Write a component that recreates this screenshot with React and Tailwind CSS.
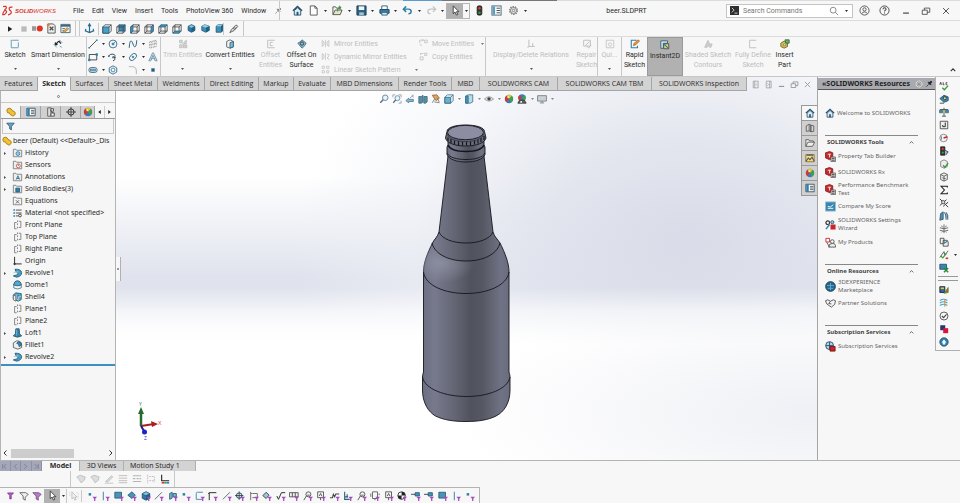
import { clsx } from "clsx";

const ICONS = {
  home: <><path d="M1 6.2 6 1.5l5 4.7" stroke="#24506e" strokeWidth="1.5" /><path d="M2.5 6v5h7V6L6 3z" fill="#dcebf3" stroke="#24506e" /><path d="M5 11V7.5h2V11" fill="#24506e" stroke="none" /></>,
  newDoc: <><path d="M2.5 1h5l2.500 2.500V11h-7.500z" fill="#fff" stroke="#555" /><path d="M7.500 1v2.500H10" stroke="#555" /></>,
  open: <><path d="M1 10.500V2h3l1 1.500h4V5" fill="#f5f5f5" stroke="#555" /><path d="M1 10.500 3.500 5.500H11L9 10.500z" fill="#e9e5c9" stroke="#555" /><path d="M6 7c0-3 1-4.500 3-4.500M7.500 1 9.500 2.500 8 4" stroke="#3f9a42" strokeWidth="1.200" /></>,
  save: <><path d="M1 1h10v10H1z" fill="#2b617f" stroke="#1d4258" /><path d="M3 1.500h6v4H3z" fill="#eef4f7" stroke="none" /><path d="M3.500 8h5v3h-5z" fill="#9fc4d6" stroke="none" /></>,
  print: <><path d="M3 1h6v4H3z" fill="#fff" stroke="#2b617f" /><path d="M1 5h10v4H1z" fill="#3d7fa3" stroke="#1d4258" /><path d="M3 8h6v3H3z" fill="#dcebf3" stroke="#2b617f" /></>,
  undo: <path d="M4.500 1.500 1.500 4.500l3 3M1.500 4.500H7q3 0 3 2.500T7 9.500" stroke="#2f7fa8" strokeWidth="1.600" />,
  redo: <path d="M7.500 1.500l3 3-3 3M10.500 4.500H5q-3 0-3 2.500t3 2.500" stroke="#c4c4c4" strokeWidth="1.400" />,
  cursor: <path d="M3.500 1v8.500l2-1.800L7 11l1.500-.7-1.500-3h2.700z" fill="#fff" stroke="#333" strokeWidth=".9" />,
  cursorOff: <><path d="M3.500 1v8.500l2-1.800L7 11l1.500-.7-1.500-3h2.700z" fill="#f2f2f2" stroke="#bbb" /><path d="M1 1v5M9 2h2v7" stroke="#ccc" strokeDasharray="1 1" /></>,
  light: <><rect x="3.500" y="1" width="5" height="10" rx="1.500" fill="#333" stroke="#222" /><circle cx="6" cy="3.500" r="1.400" fill="#e0402c" stroke="none" /><circle cx="6" cy="8.500" r="1.400" fill="#2d9b45" stroke="none" /></>,
  list: <><rect x="1" y="1" width="10" height="10" fill="#fff" stroke="#41677c" /><path d="M1.500 1.500h3v9h-3z" fill="#5d9dbb" stroke="none" /><path d="M6 3.500h4M6 6h4M6 8.500h4" stroke="#444" /></>,
  gear: <><circle cx="6" cy="6" r="4.200" stroke="#777" strokeWidth="1.400" strokeDasharray="1.600 1" /><circle cx="6" cy="6" r="3.200" stroke="#777" /><circle cx="6" cy="6" r="1.300" stroke="#777" /></>,
  gearLight: <><circle cx="6" cy="6" r="4.500" fill="#ddd" stroke="#f2f2f2" strokeWidth="1.500" strokeDasharray="1.600 1" /><circle cx="6" cy="6" r="3.200" stroke="#666" /><circle cx="6" cy="6" r="1.300" fill="#555" /></>,
  pin: <path d="M5 2.500 9.500 7M9 1.500 10.500 3 8.500 5 8 7.500 4.500 4 7 3.500zM5.500 6.500 2 10" fill="#999" stroke="#777" />,
  pinDark: <path d="M5 2.500 9.500 7M9 1.500 10.500 3 8.500 5 8 7.500 4.500 4 7 3.500zM5.500 6.500 2 10" fill="#222" stroke="#222" />,
  user: <><circle cx="6" cy="6" r="5" stroke="#555" /><circle cx="6" cy="4.800" r="1.800" stroke="#555" /><path d="M2.800 9.500q3.200-4 6.400 0" stroke="#555" /></>,
  help: <><circle cx="6" cy="6" r="5" stroke="#444" /><path d="M4.300 4.700q.2-1.700 1.800-1.700 1.600 0 1.600 1.500C7.700 5.700 6 5.600 6 7.200M6 8.200v1" stroke="#444" strokeWidth="1.100" /></>,
  min: <path d="M2.500 8.500h7" stroke="#333" strokeWidth="1.300" />,
  restore: <path d="M1.500 5h6v5h-6zM4 5V2.500h6.500v5H7.500" stroke="#444" />,
  close: <path d="m2.500 2.500 7 7m0-7-7 7" stroke="#444" strokeWidth="1.100" />,
  minGrey: <path d="M2.500 8.500h7" stroke="#888" strokeWidth="1.300" />,
  restoreGrey: <path d="M1.500 5h6v5h-6zM4 5V2.500h6.500v5H7.500" stroke="#888" />,
  closeGrey: <path d="m2.500 2.500 7 7m0-7-7 7" stroke="#999" strokeWidth="1.200" />,
  paneLeft: <path d="M3 1.500h6.500v9H3zM5 1.500v9M8.200 4.500 6.700 6l1.500 1.500" stroke="#999" />,
  paneRight: <path d="M3 1.500h6.500v9H3zM7.500 1.500v9M4.500 4.500 6 6 4.500 7.500" stroke="#999" />,
  search: <><circle cx="5" cy="5" r="3.500" stroke="#777" /><path d="m7.500 7.500 3.500 3.500" stroke="#777" /></>,
  prompt: <><rect width="12" height="12" fill="#2f2f2f" stroke="none" /><path d="m2.500 2.500 3 3-3 3M6 9.500h4" stroke="#fff" /></>,
  play: <path d="M3 2v8l6.500-4z" fill="#222" stroke="none" />,
  stop: <path d="M2 2h8v8H2z" fill="#bbb" stroke="none" />,
  record: <><path d="M0 3.500h4.500v5H0z" fill="#999" stroke="none" /><circle cx="8.500" cy="6" r="3.300" fill="#dd3322" stroke="none" /></>,
  macroNew: <><path d="M2 1h6l2 2v8H2z" fill="#eee" stroke="#555" /><path d="M4 4l4 4M4 8l4-4" stroke="#555" strokeWidth="1.500" /><path d="M1 1h3v2H1z" fill="#e07b2d" stroke="none" /></>,
  macroEdit: <><path d="M1 1.500h10v9H1z" fill="#eef3f6" stroke="#41677c" /><path d="M1 3h10" stroke="#41677c" strokeWidth="2" /><path d="M3 9.500 8 5l1.500 1.500L4.500 10.500z" fill="#e4ad4a" stroke="#80602a" strokeWidth=".6" /><path d="M2.500 6h3M2.500 8h2" stroke="#777" /></>,
  anchor: <path d="M6 1v9M2 6.500 1.500 8.500 6 10.500l4.500-2L10 6.500M4.500 3.500 6 1l1.500 2.500" stroke="#2b6d91" strokeWidth="1.300" />,
  cubeFront: <><path d="M1 3.500 3.500 1H11v7.500L8.500 11H1z" fill="#fff" stroke="#444" /><path d="M1 3.500h7.500V11H1z" fill="#4e9dc4" stroke="#235a78" /><path d="M8.500 3.500 11 1" stroke="#444" /></>,
  cubeBack: <><path d="M3.500 1H11v7.500H3.500z" fill="#3d87ad" stroke="#235a78" /><path d="M1 3.500h7.500V11H1zM1 3.500 3.500 1M1 11l2.500-2.500M8.500 11 11 8.500M8.500 3.500 11 1" stroke="#444" /></>,
  cubeLeft: <><path d="M1 3.500 3.500 1H11v7.500L8.500 11H1zM8.500 3.500V11M1 3.500h7.500L11 1M3.500 8.500H11" stroke="#444" /><path d="M1 3.500 3.500 1v7.500L1 11z" fill="#4e9dc4" stroke="#235a78" /></>,
  cubeRight: <><path d="M1 3.500 3.500 1H11v7.500L8.500 11H1zM3.500 1v7.500H11M1 3.500h7.500M1 11l2.500-2.500" stroke="#444" /><path d="M8.500 3.500 11 1v7.500L8.500 11z" fill="#4e9dc4" stroke="#235a78" /></>,
  cubeTop: <><path d="M1 3.500V11h7.500L11 8.500V1M8.500 3.500V11M3.500 1v7.500H11M1 11l2.500-2.500" stroke="#444" /><path d="M1 3.500 3.500 1H11L8.500 3.500z" fill="#4e9dc4" stroke="#235a78" /></>,
  cubeBottom: <><path d="M1 11V3.500L3.500 1H11v7.500M1 3.500h7.500V11M8.500 3.500 11 1M3.500 1v7.500" stroke="#444" /><path d="M1 11l2.500-2.500H11L8.500 11z" fill="#4e9dc4" stroke="#235a78" /></>,
  iso: <><path d="M6 1 10.500 3.200v5.500L6 11 1.500 8.700V3.200z" fill="#2d7ba3" stroke="#1c5474" /><path d="M6 1 10.500 3.200 6 5.500 1.500 3.200z" fill="#8cc4de" stroke="#1c5474" strokeWidth=".6" /><path d="M6 5.500 10.500 3.200v5.500L6 11z" fill="#1f5f82" stroke="none" /></>,
  isoB: <><path d="M5 1 11 3v5.500L6.500 11 1 8.500V3z" fill="#3c8fb8" stroke="#1c5474" /><path d="M5 1 11 3 6.500 5 1 3z" fill="#9acde3" stroke="none" /><path d="M6.500 5 11 3v5.500L6.500 11z" fill="#1f5f82" stroke="none" /></>,
  isoC: <><path d="M1.500 3 4 1h6.500v8L8 11H1.500z" fill="#3c8fb8" stroke="#1c5474" /><path d="M1.500 3 4 1h6.500L8 3z" fill="#9acde3" stroke="none" /><path d="M8 3l2.500-2v8L8 11z" fill="#1f5f82" stroke="none" /></>,
  viewPick: <path d="M1 10.500 3 6.500 8 1.500q2-.5 2.500 1.500L6 8 3.500 9zM5 6l2-2M6 7l3-3" fill="#ddd" stroke="#555" />,
  sketch: <path d="M10.500 1.500H3q-1.500 0-1.500 1.500v7.500H10M1 1v1M10 4v6" stroke="#4f8fb0" />,
  dim: <><path d="M2.500 7 7 2.500M2.500 7l.5-3M2.500 7l3-.5M7 2.500l2.500 3" stroke="#222" strokeWidth="1.400" /><path d="M1 6.500 4.500 10M7.500 1l3.500 3.500M8 8.500l2.500 1.500" stroke="#4f8fb0" /></>,
  line: <><path d="M1.500 10.500 10.500 1.500" stroke="#333" /><path d="M.5 9.500h2v2h-2zM9.500.5h2v2h-2z" fill="#2f7fa8" stroke="none" /></>,
  circle: <><circle cx="6" cy="6" r="4.700" stroke="#2b5f7e" /><path d="M6 6 9.500 2.500M5 5h2v2H5z" fill="#2f7fa8" stroke="#2f7fa8" /></>,
  spline: <path d="M1.500 10.500C2 1 4 0 6 6s4 4 4.500-4.500" stroke="#2b5f7e" strokeWidth="1.200" />,
  planeIcon: <path d="M2 3.500 10 1.500V9l-8 2zM4.500 3v7.500M7.500 2v7.500M2 7l8-2" stroke="#999" strokeDasharray="2 1" />,
  rect: <><path d="M1.500 3h9v6.500h-9z" stroke="#333" /><path d="M.5 8.500h2v2h-2zM9.500 2h2v2h-2z" fill="#2f7fa8" stroke="#2f7fa8" /></>,
  arc: <><path d="M1 4.500Q5 .5 9 4.500M6.500 5.500l3 1M7 5.500Q10 9.500 6 10.500" stroke="#333" strokeWidth="1.100" /><path d="M0 4h2v2H0zM5 5.500h2v2H5z" fill="#2f7fa8" stroke="none" /></>,
  ellipse: <><ellipse cx="6" cy="6" rx="5" ry="3.200" transform="rotate(-45 6 6)" stroke="#2b5f7e" /><circle cx="6" cy="6" r="1" fill="#2f7fa8" stroke="#2f7fa8" /></>,
  text: <path d="M1 10.500 5.500 1h1L11 10.500H8.500L6 4 3.500 10.500zM3.500 8h5" fill="#cbdde8" stroke="#6a8fa5" />,
  slot: <><rect x="1" y="3" width="10" height="6" rx="3" stroke="#2b5f7e" /><rect x="3" y="4.800" width="6" height="2.400" fill="#85b7d0" stroke="#2b5f7e" strokeWidth=".7" /></>,
  polygon: <><path d="m6 1 4.500 2.500v5L6 11 1.500 8.500v-5z" stroke="#2b5f7e" /><circle cx="6" cy="6" r="2.300" stroke="#2f7fa8" /></>,
  fillet: <path d="M1 2h4q5 0 5 5v4" stroke="#aaa" />,
  point: <path d="M4 4h4v4H4z" fill="#245d82" stroke="none" />,
  trim: <path d="M2 1.500h3v3H2zM7 4l3-2.500v4H7zM2 7h3v3.500H2zM6.500 7h4v3.500h-4zM5 5l5 5" fill="#ddd" stroke="#bbb" />,
  convert: <><path d="M2 3 6 1l4 2v6.500l-4 1.500-4-1.500z" fill="#eef3f6" stroke="#555" /><path d="M6 4.500 10 3v6.500L6 11z" fill="#86b9d2" stroke="#2b5f7e" /></>,
  offset: <path d="M10.500 1.500H2v9h8.500M8 4H5v4h3" stroke="#c2c2c2" strokeWidth="1.200" />,
  surface: <><path d="M1 5q3-1 5-4l5 4q-1 3-5 6z" fill="#8dbdd3" stroke="#356c88" /><circle cx="6" cy="5.500" r="2" stroke="#333" /></>,
  mirror: <path d="M6 1v10M1.500 2v8L4 8V4zM10.500 2v8L8 8V4z" fill="#eee" stroke="#c2c2c2" />,
  mirrorDyn: <path d="M6 1v10M1.500 2v8L4 8V4zM8 3q3-1 3 2L8 8l3 2" fill="#eee" stroke="#c2c2c2" />,
  pattern: <path d="M1.500 1.500h3v3h-3zM7.500 1.500h3v3h-3zM1.500 7.500h3v3h-3zM7.500 7.500h3v3h-3z" stroke="#c2c2c2" />,
  move: <path d="M1 5.500v-4h5M4.500 0 6 1.500 4.500 3M7.500 1.500h3.500v3.500H7.500zM1 8h3" stroke="#bbb" />,
  copy: <path d="M1.500 6.500h4v4h-4zM2 4V2h4M7.500 1.500h3v3h-3z" stroke="#bbb" />,
  relations: <path d="M3.500 1v8h7M1.500 9.500h2M8 5v4" stroke="#c2c2c2" strokeWidth="1.300" />,
  repair: <path d="M2 1.500h8v7H2zM4 8l5-5M6 9l2 2 3-4" stroke="#c2c2c2" strokeWidth="1.200" />,
  snaps: <><path d="M1.500 1.500h9v9h-9z" stroke="#c2c2c2" /><circle cx="6" cy="6.500" r="2" stroke="#c2c2c2" /></>,
  rapid: <><path d="M8 1.500H1.500v9H9V8" stroke="#2f7fa8" strokeWidth="1.300" /><path d="m4 8 1-3 5-4 1.500 1.500L7 7z" fill="#e49a3a" stroke="#9a4b1c" strokeWidth=".7" /></>,
  instant: <><path d="M1 1h8v3H4v6H1z" fill="#cfe5ef" stroke="#235a78" /><path d="M4.500 4.500h6v6h-6z" fill="#e2d56a" stroke="#444" /><path d="m5 5 5 5" stroke="#2f7fa8" strokeWidth="1.500" /></>,
  shaded: <path d="M2 10 6 1.500 8 6h3l-1.500 4H8L6.500 8 5 10z" fill="#ccc" stroke="#c2c2c2" />,
  define: <path d="M10 1.500H2v9h8" stroke="#c2c2c2" strokeWidth="1.200" />,
  part: <><path d="M1 5 5 2.500l4 2V9L5 11 1 9z" fill="#d9c24f" stroke="#6e5c15" /><path d="M6 1h5v4H7z" fill="#6bb068" stroke="#2f6a38" /><path d="M4 6h3v2H4z" fill="#fff" stroke="#444" strokeWidth=".6" /></>,
  partYellow: <path d="M1 4.500Q1 1.500 4 1.500 6.500 1.500 7 4l3 1.500q1.500 1 1 3.500L8.500 11 5 9 4 7H2z" fill="#f2c230" stroke="#9c7414" />,
  property: <><path d="M1 1.500h10v9H1z" fill="#fff" stroke="#244b63" /><path d="M1.500 1.500h3v9h-3z" fill="#2f7fa8" stroke="none" /><path d="M6 4h4M6 6h4M6 8h4" stroke="#444" /></>,
  config: <><path d="M2 1h4v10H2z" fill="#ddd" stroke="#555" /><path d="M6 2h3v3H6zM6 7h4v4H6zM5 4l4 4" fill="#eee" stroke="#444" /></>,
  target: <><circle cx="6" cy="6" r="3.700" stroke="#333" strokeWidth="1.200" /><path d="M6 0v12M0 6h12" stroke="#333" /></>,
  ball: <><circle cx="6" cy="6" r="5" fill="#3b78c2" stroke="none" /><path d="M6 6 3 2a5 5 0 0 1 6.500.5z" fill="#e8c52f" stroke="none" /><path d="M6 6 9.500 2.500A5 5 0 0 1 8.500 10.300z" fill="#3ba24a" stroke="none" /><path d="M6 6 3 2a5 5 0 0 0-.5 7.500z" fill="#d9372b" stroke="none" /><circle cx="5" cy="4" r="1.200" fill="#ffffffaa" stroke="none" /></>,
  scene: <><circle cx="6" cy="4.500" r="4.300" fill="#3b78c2" stroke="none" /><path d="M6 4.500 9.500 1.500a4.300 4.300 0 0 1-1 6.500z" fill="#3ba24a" stroke="none" /><path d="M6 4.500 3 1.500a4.300 4.300 0 0 0-.5 6z" fill="#d9372b" stroke="none" /><path d="M1 11 3 7.500h6l2 3.500z" fill="#666" stroke="#333" /><path d="M4 8.500h2v2H4z" fill="#eee" stroke="none" /></>,
  filter: <path d="M1 1.500h10L7.200 6v4.500L4.800 9V6z" fill="#6aa5c2" stroke="#23506b" />,
  filterPurple: <path d="M2 2.500h8L7 6v4.500H5V6z" fill="#b05bc4" stroke="#7c3491" />,
  filterGrey: <path d="M1 2h7l3 2-3.500 3.500v3.500L5 9.500V6z" fill="#f2f2f2" stroke="#555" />,
  filters: <path d="M1 2h7l3 2-3.500 3.500v3.500L5 9.500V6z" fill="#b77ac7" stroke="#6f5078" />,
  history: <><path d="M1 10.500v-9h3l1 1.200h6v7.800z" fill="#eee" stroke="#777" /><circle cx="6.500" cy="6.700" r="2.300" fill="#9ccbe0" stroke="#2f7fa8" /></>,
  sensors: <><path d="M1 10.500v-9h3l1 1.200h6v7.800z" fill="#eee" stroke="#777" /><circle cx="7" cy="7" r="2.300" fill="#fff" stroke="#c2483b" /><path d="M7 7V5.500" stroke="#444" /></>,
  annotations: <><path d="M1 10.500v-9h3l1 1.200h6v7.800z" fill="#eee" stroke="#777" /><path d="m4.500 9 2-4.500 2 4.500M5 7.800h3" stroke="#25658a" /></>,
  bodies: <><path d="M1 10.500v-9h3l1 1.200h6v7.800z" fill="#eee" stroke="#777" /><path d="M4 5h4.500v4.500H4z" fill="#2f7fa8" stroke="#235a78" /></>,
  equations: <><path d="M1 10.500v-9h3l1 1.200h6v7.800z" fill="#f4f4f4" stroke="#777" /><path d="m4 5 4 4M8 5 4 9" stroke="#555" /></>,
  material: <><path d="M1 2.500h2M1 6h2M1 9.500h2" stroke="#3a86ae" strokeWidth="1.800" /><path d="M4 2.500h7M4 6h7M4 9.500h3" stroke="#555" strokeWidth="1.200" /><circle cx="9" cy="9" r="1.700" stroke="#333" /></>,
  plane: <path d="M5 3H2.500v7.500H5M7.500 1.500h2.500V9H7.500M6 .5v2M6 4v2M6 8v2" stroke="#777" />,
  origin: <path d="M2.500 1v8.500H11M1 9.500h3M2.500 8v3" stroke="#333" strokeWidth="1.200" />,
  revolve: <><path d="M3 1.500Q10 1 11 5.500 11 10 5 11L1 9.500 6 8Q8 6 4.500 5z" fill="#4a9cc3" stroke="#1e5675" /><path d="M1.500 5.500 7 4.500" stroke="#9fd0e5" strokeWidth="1.400" /></>,
  dome: <><path d="M1.500 5.500h9v4q-4.500 2.500-9 0z" fill="#eef5f8" stroke="#45778f" /><path d="M1.500 6Q2 1 6 1t4.500 5Q6 8 1.500 6z" fill="#56a7cb" stroke="#1e5675" /></>,
  shell: <><path d="M1 3.500 4 1l6.500 1v7L7 11 3 9.500 1 8z" fill="#59a9cc" stroke="#1e5675" /><path d="M1 3.500 4 5v6L1 9.500z" fill="#eee" stroke="#666" /><path d="M5.500 3.500v5L7 10V5.500h3" fill="#173c52" stroke="#fff" strokeWidth=".7" /></>,
  loft: <><path d="M4 1h4l.5 6L11 9.500 6 11 1 9.500 3.500 7z" fill="#357fa5" stroke="#1e5675" /><path d="M5 2v7" stroke="#84bdd7" /></>,
  fillet3d: <><path d="M1 3.500 5 1q6 0 6 5v3l-4.500 2L1 9z" fill="#e8eef1" stroke="#555" /><path d="M5 4q3 0 3 4l3-2Q10.500 2 7 2z" fill="#3a86ae" stroke="#23506b" /></>,
  zoomFit: <><circle cx="7.500" cy="4.500" r="3.300" fill="#e9f3f8" stroke="#4a7c98" /><path d="M5 7 1.500 10.500" stroke="#666" strokeWidth="1.600" /></>,
  zoomArea: <><path d="M1 4V1h3M8 1h3v3M11 8v3H8" stroke="#999" /><circle cx="6.500" cy="5" r="3" fill="#e9f3f8" stroke="#5a8ca8" /><path d="M4.500 7 1.500 10.500" stroke="#666" strokeWidth="1.500" /></>,
  prevView: <><path d="M1 8 4.500 5v1.500H10V9H4.500v1.500z" fill="#8bbad0" stroke="#4a7c98" /><path d="M10.500 1 6 5M8 1.500 10.500 4" stroke="#888" /></>,
  section: <path d="M1 3h3l2-1.500v8L4 11H1zM7 3h4v6.500L9 11H7z" fill="#4b93b6" stroke="#566" />,
  annotView: <><path d="M1.500 1.500 7 1l3 4-4 3z" fill="#e6a95b" stroke="#956423" /><path d="M1.500 10.500 5 5M4 9.500l6 1M7 4l3 6" stroke="#888" strokeWidth="1.200" /></>,
  orient: <><path d="M1 4 4 1h7v7l-3 3H1z" fill="#e8f3f8" stroke="#45778f" /><path d="M1 4h7v7H1z" fill="#6fb0cc" stroke="#356c88" /><path d="m8 4 3-3" stroke="#45778f" /></>,
  display: <><path d="M2 2.500 5 1h5.500v8.500L7.500 11H2z" fill="#b8dbea" stroke="#45778f" /><path d="M2 2.500h3V11H2z" fill="#4b93b6" stroke="#356c88" /></>,
  eye: <><path d="M.5 6Q6 .5 11.500 6 6 11 .5 6z" fill="#ddd" stroke="#999" /><circle cx="6" cy="5.800" r="2" fill="#444" stroke="none" /></>,
  monitor: <><path d="M.7 2h10.600v6.500H.7z" fill="#c9d2d8" stroke="#777" /><path d="M6 8.500v2M3.500 10.700h5" stroke="#777" /></>,
  library: <path d="M1.500 3.500 5 1.500v8L1.500 10zM5 1.500l2 1v8L5 9.500M7 2.500l3.500 1V10L7 10.500z" fill="#d6d6d6" stroke="#555" />,
  openFolder: <path d="M1 10V2h3.500l1 1.500H10V5M1 10l2.500-5h8L9 10z" fill="#eee" stroke="#555" />,
  palette: <><path d="M1 2h10v8.500H1z" fill="#f1dc91" stroke="#8a6d1f" /><path d="m1 10 3-4 2 2 2.500-3L11 10M2 2.500h8" stroke="#555" strokeWidth="1.300" /></>,
  redTool: <><path d="M.5 2 5 .5l3.500 1.500v6L5 9.500l-4.500-2z" fill="#c4282d" stroke="#7e1519" strokeWidth=".8" /><path d="M3 3.500h3.500M5 3.500V7" stroke="#fff" strokeWidth=".9" /><path d="M6.500 6.500h5v5h-5z" fill="#ddd" stroke="#555" strokeWidth=".8" /><path d="M7.500 8h3M7.500 10h3" stroke="#333" /></>,
  score: <><path d="M.5 1h11v10H.5z" fill="#3a86ae" stroke="#9bc0d1" /><path d="M3 8h6M3 6q3 2 6-2" stroke="#fff" /></>,
  wizard: <><circle cx="3" cy="4" r="2" stroke="#333" strokeWidth="1.300" /><circle cx="8" cy="3.500" r="1.700" fill="#9bc0d1" stroke="#2b5f7e" /><path d="M6 6h5.500v5.500H6z" fill="#c4282d" stroke="none" /><path d="m1 11 4-5" stroke="#2f7fa8" strokeWidth="1.500" /></>,
  products: <><path d="M1 1.500h4v4H1z" fill="#fff" stroke="#c4282d" /><circle cx="8" cy="5" r="2" stroke="#555" /><path d="M4 11q0-4 4-4t3.500 4zM2 6l3 5" fill="#eee" stroke="#555" /></>,
  globe: <><circle cx="6" cy="6" r="5.300" fill="#24678d" stroke="#163f58" /><path d="M2 5h8M6 2v8M3 8h6" stroke="#69a8c8" /></>,
  partner: <path d="M.5 3 3 2l3 1.500L9 2l2.500 1-1 4L7 10 2 6.500zM6 3.500 4 6l3 .5" fill="#f3f3f3" stroke="#555" />,
  subscription: <><circle cx="5" cy="5" r="4.300" fill="#b6d4e2" stroke="#24506e" /><path d="M5 1v8M1 5h8" stroke="#24506e" /><path d="M5.500 6H11v5H5.500z" fill="#c4282d" stroke="#7e1519" /></>,
  check: <><path d="M1 4.500 2 1.500l1 3M5 1.500v3h1.500M10 2H8.500v2.500H10" stroke="#333" /><path d="m4 8 2.500 2.500L11 5.500" stroke="#3a9b3d" strokeWidth="1.600" /></>,
  measure: <><path d="M1 5.500 6 1.500l5 2V8L6 10z" fill="#3a86ae" stroke="#1d4f6d" /><circle cx="7" cy="5" r="1.800" fill="#e9d78a" stroke="#333" /><path d="M1 11h5" stroke="#333" /></>,
  scale: <><path d="M6 1v10M3.500 11h5M1 3h10" stroke="#444" /><path d="M.5 4h4v3h-4zM7.500 4h4v3h-4z" fill="#3a86ae" stroke="#1d4f6d" strokeWidth=".6" /><path d="M5 4h2v3H5z" fill="#d9b541" stroke="none" /></>,
  sectionProps: <><path d="M1.500 1.500h9v9h-9z" fill="#eee" stroke="#444" /><path d="M7.500 3v5h-3V6" stroke="#333" strokeWidth="1.200" /></>,
  gauge: <><circle cx="5.500" cy="6" r="4.500" fill="#f5f5f5" stroke="#777" /><path d="M5.500 6 10 4.500" stroke="#c4282d" strokeWidth="1.700" /><path d="M3 4v4" stroke="#3a86ae" /></>,
  stats: <><path d="M2 1h5v10H2z" fill="#333" stroke="#222" /><circle cx="4.500" cy="3.500" r="1.300" fill="#e04232" stroke="none" /><circle cx="4.500" cy="8" r="1.300" fill="#38a348" stroke="none" /><path d="m7 5 4 2-3 4" fill="#8bbad0" stroke="#444" /></>,
  checkCube: <><path d="M2 3 6 1l4 2v6l-4 2-4-2z" fill="#eee" stroke="#777" /><path d="m5 7.500 2 2.500 4-5" stroke="#3a9b3d" strokeWidth="1.600" /></>,
  compareCube: <path d="M2 3 6 1l4 2v6l-4 2-4-2zM2 3l4 2 4-2M6 5v6M4 7l4 1" fill="#eee" stroke="#555" />,
  sigma: <path d="M10 3V1.500H2.500L6.500 6l-4 4.500H10V9" stroke="#222" strokeWidth="1.300" />,
  deviation: <><path d="m1 1 10 10M1 9l8-7M5 10l6-5" stroke="#444" strokeWidth="1.200" /><circle cx="5" cy="5" r="2" fill="#ddd" stroke="#444" /></>,
  zebra: <><path d="M2 3 5 1v9l-4 1zM6.500 1.500q3 3 2 9M8.500 1.500q3 3 2 9" fill="#4b93b6" stroke="#31566a" /></>,
  curvature: <path d="M1 4.500Q6 7 11 4.500M1 7.500q5 2.500 10 0M6 .500V11M3 2l1.500 2M9 2 7.500 4M3 10l1-1M9 10 8 9" stroke="#555" />,
  docs: <><path d="M1.500 1.500H6V8H1.500zM5 4h5l1 2v5H5z" fill="#eee" stroke="#444" /><path d="m5 8 5-3" stroke="#2f7fa8" strokeWidth="1.500" /></>,
  costing: <><path d="M1 9 6 2l1 4 4-5" stroke="#555" strokeWidth="1.100" /><path d="m2 7 2.500 2.500L9 4" stroke="#3a9b3d" strokeWidth="1.500" /><path d="M8 10h3" stroke="#d33" strokeWidth="2" /></>,
  table: <><path d="M1 1.500h8v6H1z" fill="#3a86ae" stroke="#1d4f6d" /><path d="m6 6 5 5m0-5-5 5" stroke="#2d8a34" strokeWidth="1.800" /></>,
  sim: <><path d="M1 2h6v7H1z" fill="#2f63a8" stroke="#222" /><path d="M2 4h4" stroke="#e3c52c" strokeWidth="2" /><path d="m6 10 5-7v6z" fill="#d94832" stroke="#3a9b3d" /></>,
  flow: <><path d="M1 3q5-3 9 0M1 6q5-3 9 0M1 9q5-3 9 0" stroke="#48a3c6" strokeWidth="1.400" /><path d="M7 1.500v9" stroke="#e0843a" strokeWidth="1.200" /></>,
  circleCheck: <><circle cx="6" cy="6" r="4.800" fill="#f8f8f8" stroke="#444" /><path d="m3.500 6 2 2 3.500-4" stroke="#444" strokeWidth="1.300" /></>,
  squares: <><path d="M1.500 1.500h6v6h-6z" fill="#25356e" stroke="none" /><path d="M5 5h6v6H5z" fill="#d5173d" stroke="none" /></>,
  blueCircle: <><circle cx="6" cy="6" r="5" fill="#2f7fa8" stroke="#1d4f6d" /><path d="M3 6.500 6 3l3 3.500H7.500V9h-3V6.500z" fill="#fff" stroke="none" /></>,
  greyBlob: <path d="M1 3.500 5 1.500l6 2-1 4-4 3-2-3.500z" fill="#ddd" stroke="#bbb" />,
  greyPen: <path d="m2 9 7-7 1.500 1.500-6 6zM1 11h10" fill="#ddd" stroke="#bbb" />,
  greyLines: <path d="M1 2h10M1 5h10M1 8h10M1 10.500h10" stroke="#b5b5b5" />,
  greyDash: <path d="M1 2h10M1 5.500h3M5.500 5.500H8M9 5.500h2M1 9h10" stroke="#b5b5b5" strokeWidth="1.300" />,
  greyHide: <path d="M2 1v10M4 3h6v5H4M9 10l2-2" stroke="#b5b5b5" strokeDasharray="2 1" />,
  colorMode: <><path d="M2 1v7h9" stroke="#222" strokeWidth="1.300" /><path d="M2 10.500h3" stroke="#d9372b" strokeWidth="2" /><path d="M5 10.500h3" stroke="#3ba24a" strokeWidth="2" /><path d="M8 10.500h3" stroke="#3b78c2" strokeWidth="2" /></>,
  fVertex: <path d="M2 2.500h3v3H2z" fill="#2f7fa8" stroke="none" />,
  fEdge: <path d="M4 1v10" stroke="#4b93b6" strokeWidth="1.300" />,
  fFace: <path d="M1 1.500h8v7H1z" fill="#4b93b6" stroke="#235a78" />,
  fSurface: <path d="M1 5 6 1l4 4-4 4z" fill="#4b93b6" stroke="#235a78" />,
  fAxis: <path d="M1 10 9.500 1.500" stroke="#3d5969" />,
  fPlane: <path d="M2 3 5 1.500v7L2 10zM6 3h4v4H6z" fill="#7bb3ce" stroke="#235a78" />,
  fCurve: <path d="M9.500 1.500H3Q1.500 1.500 1.500 3v7H9" stroke="#4b93b6" strokeWidth="1.200" />,
  fSketchSeg: <path d="M1.500 11V2H10M1.500 2 0 3.500" stroke="#333" strokeWidth="1.200" />,
  fTarget: <><circle cx="5" cy="5.500" r="3.200" stroke="#356c88" strokeWidth="1.300" /><path d="M5 .5v10M0 5.500h10" stroke="#333" /></>,
  fDim: <path d="M2 1v10M4 3h6v5H4M2 3h2" stroke="#777" strokeWidth="1.200" />,
  fTag: <path d="M1 5.500 5 1.500 8.500 5 5 9z" fill="#9ec6da" stroke="#333" />,
  fRough: <path d="m1 6 2 4 3.500-8H11" stroke="#333" strokeWidth="1.200" />,
  fTol: <path d="M.5 2h10.500v5H.5zM4 2v5M7.500 2v5" fill="#eee" stroke="#444" />,
  fNote: <><circle cx="6.500" cy="4" r="3" stroke="#444" /><path d="m4 6-3 5M5 5h3" stroke="#444" /></>,
  fDatum: <path d="M2 1h7v7H2zM4 6l1.500-3L7 6M5.500 8v3" stroke="#444" />,
  fWeld: <path d="M0 8h3l1-4 1.500 3L7 3.500h4" stroke="#444" strokeWidth="1.300" />,
  fHole: <path d="M2 1v9h6M5 4v4M2 7h4" stroke="#2b5f7e" strokeWidth="1.300" />,
  fBlock: <path d="M3 1h6v8H3zM1 3v4M11 3v2M6 9v2" stroke="#555" />,
  fMass: <><circle cx="5.500" cy="5.500" r="4.500" fill="#fff" stroke="#222" /><path d="M5.500 5.500V1A4.500 4.500 0 0 1 10 5.500zM5.500 5.500V10A4.500 4.500 0 0 1 1 5.500z" fill="#222" stroke="none" /></>,
  fConn: <><path d="M0 4h6" stroke="#333" /><path d="M5 2h5v4H5z" fill="#4b93b6" stroke="#235a78" /></>,
};

function Icon({ name, className = "w-3 h-3", funnel }) {
  return (
    <svg viewBox="0 0 12 12" fill="none" className={clsx("shrink-0", className)} aria-hidden="true">
      {ICONS[name]}
      {funnel && <path d="M6.500 7H12L10 9.200V12H8.500V9.200z" fill="#a44bbb" />}
    </svg>
  );
}

function Caret({ className = "w-2.5" }) {
  return (
    <span className={clsx("flex justify-center shrink-0", className)}>
      <svg viewBox="0 0 6 4" className="w-[3px] h-0.5" aria-hidden="true"><path d="M0 0h6L3 4z" fill="currentColor" /></svg>
    </span>
  );
}

function Tool({ name, label, className = "w-3.5", size, funnel }) {
  return (
    <button aria-label={label || name} className={clsx("flex items-center justify-center shrink-0", className)}>
      <Icon name={name} className={size || "w-[11px] h-[11px]"} funnel={funnel} />
    </button>
  );
}

function Divider({ className = "h-full" }) {
  return <span className={clsx("w-px bg-[#c8c8c8] shrink-0", className)} />;
}

function TitleBar() {
  return (
    <header className="flex items-center h-5 border-b border-[#dcdcdc] pr-1 font-['Roboto',sans-serif]">
      <div className="flex items-center gap-0.5 w-[65px] pl-0.5 text-[#d8342c]">
        <svg viewBox="0 0 20 20" className="w-[11px] h-[11px]" fill="none" stroke="currentColor" strokeWidth="2.200" aria-hidden="true">
          <path d="M2 3q6-2 6 2-1 3-4 4M1 18q2-8 5-8 4 1 1 5-2 3-6 3M19 4q-6-1-6 3 0 2 3 4 3 5-5 7" />
        </svg>
        <span className="font-['Liberation_Sans'] text-[6px] italic whitespace-nowrap"><b>SOLID</b>WORKS</span>
      </div>
      <nav className="flex items-center w-[214px] gap-2 pl-2">
        {["File", "Edit", "View", "Insert", "Tools", "PhotoView 360", "Window"].map((m) => (
          <button key={m} className="whitespace-nowrap">{m}</button>
        ))}
        <Tool name="pin" label="Pin menu" size="w-2 h-2" className="w-2 ml-auto mr-0.5" />
      </nav>
      <Divider />
      <div className="flex items-center h-full pl-2.5">
        <Tool name="home" label="Home" />
        <Tool name="newDoc" label="New" className="w-3.5 ml-0.5" /><Caret />
        <Tool name="open" label="Open" /><Caret />
        <Tool name="save" label="Save" /><Caret className="w-[9px]" />
        <Tool name="print" label="Print" /><Caret className="w-[9px]" />
        <Tool name="undo" label="Undo" /><Caret />
        <Tool name="redo" label="Redo" /><Caret className="w-2" />
        <div className="flex items-center h-4 border border-[#b5b5b5]">
          <Tool name="cursor" label="Select" className="w-4 h-full bg-[#b1b1b1]" /><Caret className="w-1.5" />
        </div>
        <Tool name="light" label="Rebuild" className="w-[18px]" />
        <Tool name="list" label="File properties" className="w-4" />
        <Tool name="gear" label="Options" className="w-[18px]" /><Caret className="w-1.5" />
      </div>
      <h1 className="flex-1 text-center pr-px">beer.SLDPRT</h1>
      <form className="flex items-center h-3.5 w-[127px] bg-white border border-[#c4c4c4] px-[3px] gap-1">
        <Icon name="prompt" className="w-[9px] h-[9px]" />
        <label htmlFor="search" className="sr-only">Search Commands</label>
        <input id="search" placeholder="Search Commands" className="flex-1 min-w-0 h-3 bg-transparent outline-none placeholder:text-[#777]" />
        <Tool name="search" label="Search" className="w-2.5" size="w-2.5 h-2.5" />
        <Caret className="w-1.5" />
      </form>
      <div className="flex items-center ml-0.5">
        <Tool name="user" label="Account" className="w-[19px]" />
        <Tool name="help" label="Help" className="w-[21px]" />
        <Tool name="min" label="Minimize" className="w-[21px]" size="w-2.5 h-2.5" />
        <Tool name="restore" label="Restore" className="w-[20px]" size="w-2.5 h-2.5" />
        <Tool name="close" label="Close" className="w-[20px]" size="w-2.5 h-2.5" />
      </div>
    </header>
  );
}

function ViewBar() {
  return (
    <div className="flex items-center h-4 border-b border-[#dcdcdc]">
      <div className="flex items-center gap-px w-[75px] pl-[3px]">
        {["play", "stop", "record", "macroNew", "macroEdit"].map((n) => (
          <Tool key={n} name={n} className="w-[13px]" size={n === "play" || n === "stop" ? "w-2 h-2" : "w-[11px] h-[11px]"} />
        ))}
      </div>
      <Divider /><Divider className="h-full ml-[3px]" />
      <Tool name="anchor" label="Normal To" className="w-[18px]" />
      <Divider className="h-3" />
      <div className="flex items-center justify-between w-[122px] ml-px">
        {["cubeFront", "cubeBack", "cubeLeft", "cubeRight", "cubeTop", "cubeBottom", "iso", "isoB", "isoC"].map((n) => (
          <Tool key={n} name={n} className="w-3.5" size={n.startsWith("iso") ? "w-[9px] h-[9px]" : "w-2.5 h-2.5"} />
        ))}
      </div>
      <Divider className="h-3 ml-px" />
      <Tool name="viewPick" label="View Selector" className="w-[19px]" size="w-2.5 h-2.5" />
      <Divider />
    </div>
  );
}

function BigTool({ icon, lines, className, off, caret, active }) {
  return (
    <button
      className={clsx(
        "flex flex-col items-center h-full leading-[10px] shrink-0 whitespace-nowrap",
        className,
        off && "text-[#bdbdbd]",
        active && "bg-[#b1b1b1] border border-[#9a9a9a]"
      )}
    >
      <Icon name={icon} className="w-2.5 h-2.5 mt-0.5 mb-px" />
      {lines.map((l) => <span key={l}>{l}</span>)}
      {caret && <span className="mt-auto pb-1.5 text-[#555]"><Caret /></span>}
    </button>
  );
}

function GridTool({ name, caret = true }) {
  return (
    <div className="flex items-center w-5">
      <Tool name={name} className="w-3" size="w-2.5 h-2.5" />
      {caret && <Caret className="w-2" />}
    </div>
  );
}

function RowTool({ name, label, caret }) {
  return (
    <button className="flex items-center gap-1 h-[13px] w-full whitespace-nowrap text-[#bdbdbd]">
      <Icon name={name} className="w-[9px] h-[9px]" />
      {label}
      {caret && <span className="ml-auto text-[#777]"><Caret className="w-1.5" /></span>}
    </button>
  );
}

function Ribbon() {
  return (
    <section className="flex h-10 border-b border-[#c8c8c8] font-['Roboto',sans-serif]">
      <BigTool icon="sketch" lines={["Sketch"]} className="w-[30px]" caret />
      <BigTool icon="dim" lines={["Smart Dimension"]} className="w-[56px]" caret />
      <Divider />
      <div className="grid grid-cols-[20px_20px_20px_13px] grid-rows-3 w-[73px]">
        <GridTool name="line" /><GridTool name="circle" /><GridTool name="spline" /><GridTool name="planeIcon" caret={false} />
        <GridTool name="rect" /><GridTool name="arc" /><GridTool name="ellipse" /><GridTool name="text" caret={false} />
        <GridTool name="slot" /><GridTool name="polygon" caret={false} /><GridTool name="fillet" /><GridTool name="point" caret={false} />
      </div>
      <Divider />
      <BigTool icon="trim" lines={["Trim Entities"]} className="w-[43px]" off caret />
      <BigTool icon="convert" lines={["Convert Entities"]} className="w-[52px]" caret />
      <BigTool icon="offset" lines={["Offset", "Entities"]} className="w-[29px]" off />
      <BigTool icon="surface" lines={["Offset On", "Surface"]} className="w-[33px]" />
      <div className="flex flex-col w-[98px] ml-[3px]">
        <RowTool name="mirror" label="Mirror Entities" />
        <RowTool name="mirrorDyn" label="Dynamic Mirror Entities" />
        <RowTool name="pattern" label="Linear Sketch Pattern" caret />
      </div>
      <div className="flex flex-col w-[66px]">
        <RowTool name="move" label="Move Entities" caret />
        <RowTool name="copy" label="Copy Entities" />
      </div>
      <Divider />
      <BigTool icon="relations" lines={["Display/Delete Relations"]} className="w-[90px]" off caret />
      <BigTool icon="repair" lines={["Repair", "Sketch"]} className="w-[21px]" off />
      <Divider />
      <BigTool icon="snaps" lines={["Qui..."]} className="w-[23px]" off caret />
      <Divider />
      <BigTool icon="rapid" lines={["Rapid", "Sketch"]} className="w-[25px]" />
      <BigTool icon="instant" lines={["Instant2D"]} className="w-[36px]" active />
      <BigTool icon="shaded" lines={["Shaded Sketch", "Contours"]} className="w-[50px]" off />
      <BigTool icon="define" lines={["Fully Define", "Sketch"]} className="w-[40px]" off />
      <BigTool icon="part" lines={["Insert", "Part"]} className="w-[23px]" />
      <button aria-label="Collapse ribbon" className="ml-auto self-end p-1">
        <svg viewBox="0 0 8 5" className="w-1.5 h-1" fill="none" stroke="#333" strokeWidth="1.500"><path d="m1 4 3-3 3 3" /></svg>
      </button>
    </section>
  );
}

const TABS = [
  ["Features", "w-[38px]"], ["Sketch", "w-[33px]"], ["Surfaces", "w-[38px]"], ["Sheet Metal", "w-[49px]"],
  ["Weldments", "w-[47px]"], ["Direct Editing", "w-[54px]"], ["Markup", "w-[35px]"], ["Evaluate", "w-[37px]"],
  ["MBD Dimensions", "w-[68px]"], ["Render Tools", "w-[53px]"], ["MBD", "w-[28px]"], ["SOLIDWORKS CAM", "w-[78px]"],
  ["SOLIDWORKS CAM TBM", "w-[94px]"], ["SOLIDWORKS Inspection", "w-[95px]"],
];

function CommandTabs() {
  return (
    <div className="flex items-center h-3.5">
      {TABS.map(([t, w]) => (
        <button
          key={t}
          className={clsx(
            "flex items-center justify-center h-full shrink-0 whitespace-nowrap border-r border-b border-[#a5a5a5]",
            w,
            t === "Sketch" ? "bg-[#f7f7f7] font-bold border-b-[#f7f7f7]" : "bg-[#d3d3d3]"
          )}
        >
          {t}
        </button>
      ))}
      <div className="flex items-center pl-0.5">
        {["paneLeft", "paneRight", "minGrey", "restoreGrey", "closeGrey"].map((n) => (
          <Tool key={n} name={n} className="w-[13px]" size="w-[9px] h-[9px]" />
        ))}
      </div>
    </div>
  );
}

const TREE = [
  ["history", "History", true], ["sensors", "Sensors"], ["annotations", "Annotations", true],
  ["bodies", "Solid Bodies(3)", true], ["equations", "Equations"], ["material", "Material <not specified>"],
  ["plane", "Front Plane"], ["plane", "Top Plane"], ["plane", "Right Plane"], ["origin", "Origin"],
  ["revolve", "Revolve1", true], ["dome", "Dome1"], ["shell", "Shell4"], ["plane", "Plane1"], ["plane", "Plane2"],
  ["loft", "Loft1", true], ["fillet3d", "Fillet1"], ["revolve", "Revolve2", true],
];

function FeatureTree() {
  return (
    <aside className="flex flex-col w-[116px] shrink-0 bg-[#f6f6f6] border-x border-[#b4b4b4] font-['Noto_Sans',sans-serif]">
      <div className="flex items-center justify-center h-3 border-b border-[#c8c8c8]">
        <span className="w-[3px] h-[3px] rounded-full border border-[#777]" />
      </div>
      <div className="flex h-[13px] mt-[3px] pr-px border-b border-[#999]">
        {["partYellow", "property", "config", "target", "ball"].map((n, i) => (
          <Tool
            key={n}
            name={n}
            size="w-2.5 h-2.5"
            className={clsx("border-r border-[#a5a5a5]", i === 4 ? "w-[14px]" : "w-[20px]", i === 0 ? "bg-[#f6f6f6]" : "bg-[#d0d0d0]")}
          />
        ))}
        <button aria-label="Previous tab" className="flex-1 flex items-center justify-center border-r border-[#ccc]">
          <svg viewBox="0 0 4 6" className="w-[3px] h-1"><path d="M4 0v6L0 3z" fill="#222" /></svg>
        </button>
        <button aria-label="Next tab" className="flex-1 flex items-center justify-center">
          <svg viewBox="0 0 4 6" className="w-[3px] h-1"><path d="M0 0v6l4-3z" fill="#222" /></svg>
        </button>
      </div>
      <div className="flex items-center h-[15px] mx-px px-0.5 border border-t-0 border-[#c8c8c8]">
        <Tool name="filter" label="Filter" className="w-2.5" size="w-[9px] h-[9px]" />
      </div>
      <ul className="mt-px border-b-2 border-[#3d8fc0] pb-px overflow-hidden">
        <li className="flex items-center h-3 gap-px pl-px whitespace-nowrap">
          <Icon name="partYellow" className="w-2.5 h-2.5" />
          beer (Default) &lt;&lt;Default&gt;_Dis
        </li>
        {TREE.map(([icon, label, kids]) => (
          <li key={label} className="flex items-center h-3 whitespace-nowrap">
            <span className="w-[11px] pl-[3px] shrink-0">
              {kids && <svg viewBox="0 0 4 6" className="w-0.5 h-[3px]"><path d="M0 0v6l4-3z" fill="#444" /></svg>}
            </span>
            <Icon name={icon} className="w-[11px] h-2.5 mr-[2px]" />
            {label}
          </li>
        ))}
      </ul>
      <div className="flex items-center justify-between h-3 mt-auto mb-px px-0.5">
        <button aria-label="Scroll left"><svg viewBox="0 0 4 6" className="w-1 h-1.5" fill="none" stroke="#333"><path d="M3.500.5 1 3l2.500 2.500" /></svg></button>
        <div className="flex-1 h-[9px] mx-1"><div className="w-2/3 h-full bg-[#cdcdcd]" /></div>
        <button aria-label="Scroll right"><svg viewBox="0 0 4 6" className="w-1 h-1.5" fill="none" stroke="#333"><path d="M.5.5 3 3 .5 5.500" /></svg></button>
      </div>
    </aside>
  );
}

function Bottle() {
  return (
    <svg viewBox="422 124 90 299" className="w-[90px] h-[299px]" fill="none" stroke="#15161c" strokeWidth=".9">
      <defs>
        <linearGradient id="body" x1="0" x2="1">
          <stop offset="0" stopColor="#6c6f81" />
          <stop offset=".14" stopColor="#777a8d" />
          <stop offset=".38" stopColor="#626472" />
          <stop offset=".55" stopColor="#50525d" />
          <stop offset=".68" stopColor="#555762" />
          <stop offset=".9" stopColor="#707385" />
          <stop offset="1" stopColor="#696c7c" />
        </linearGradient>
        <radialGradient id="shine" cx=".2" cy=".4" r=".4">
          <stop offset="0" stopColor="#9093a5" stopOpacity=".8" />
          <stop offset="1" stopColor="#9093a5" stopOpacity="0" />
        </radialGradient>
      </defs>
      <path d="M422.500 377v13c0 13 6 22 13 26 8 4 18 5.500 30.500 5.500s22-1.500 30-5.500c8-4 14-13 14-26v-13z" fill="url(#body)" />
      <path d="M422.500 377c0-2 .5-3 1-5V272c0-9 4-19 9-29 2-4 5-6 6.500-11l9-76h36l9 76c1.500 5 4.500 7 7 11 5 10 9 20 9 29v100c.5 2 1 3 1 5-2 12-22 19.500-43.500 19.500S424.500 389 422.500 377z" fill="url(#body)" />
      <path d="M432 243c3 12 18 18 34 18s31-6 34-18c5 10 9 20 9 29-3 14-22 21.500-43 21.500S426 286 423 272c0-9 4-19 9-29z" fill="url(#shine)" stroke="none" />
      <path d="M439 232c3 7 14 11 27 11s24-4 27-11M432 243c3 12 18 18 34 18s31-6 34-18M423.500 272c2 14 22 21.500 42.500 21.500s41-7.500 43-21.500" />
      <path d="M448 140v5l-1 2v7.500c2 5 10 7.500 19 7.500s17-2.500 19-7.500V147l-1-2v-5z" fill="url(#body)" />
      <path d="M447 153c2 4.500 10 6.500 19 6.500s17-2 19-6.500" />
      <path d="M448 145c2 5 9 6.500 18 6.500s16-2 18-6.500" strokeWidth="1.500" />
      <path d="M447 131.500c0-4 8-6.500 18.500-6.500s19 2.500 19 6.500l1.500 6.500c-1 5-10 8-20.500 8S446.500 143 445.500 138z" fill="#686b7c" />
      <path d="M448 137.500v3.500M451 139v4M454.500 140.500v4M458.500 141v4.500M462.500 141.500v4M466.500 141.500v4M470.500 141.500v4M474.500 140.500v4M478 139.500v4M481 138v4M484 136v4" strokeWidth="1.200" />
      <ellipse cx="465.500" cy="132.500" rx="18" ry="7.200" fill="#8b8ea3" />
      <path d="M447.500 134c1 5 9 7.500 18 7.500s17-2.500 18-7.500" stroke="#333540" />
    </svg>
  );
}

function Triad() {
  return (
    <svg viewBox="0 0 28 40" className="w-7 h-10 absolute left-5 bottom-[18px]" fill="none">
      <path d="M5 24V11" stroke="#256b2b" strokeWidth="2.500" />
      <path d="m2 12 3-7 3 7z" fill="#256b2b" />
      <path d="m5 24 13-2" stroke="#a71d20" strokeWidth="2" />
      <path d="m15 19 7 3-6 3z" fill="#a71d20" />
      <path d="m5 24 3 5" stroke="#1c1c8c" strokeWidth="2" />
      <circle cx="8.500" cy="30" r="2.500" fill="#1d24c4" />
      <text x="3" y="4" fontSize="5" fill="#3c7a3f">Y</text>
      <text x="22" y="23" fontSize="6" fill="#d9474a">X</text>
      <text x="8" y="38" fontSize="5" fill="#3030c8">Z</text>
    </svg>
  );
}

function Viewport() {
  return (
    <main className="flex-1 min-w-0 relative flex flex-col items-center">
      <div className="flex items-center h-4 text-[#888]">
        {["zoomFit", "zoomArea", "prevView", "section", "annotView"].map((n) => <Tool key={n} name={n} className="w-[13px]" size="w-2.5 h-2.5" />)}
        <Tool name="orient" label="View orientation" className="w-[13px]" size="w-2.5 h-2.5" /><Caret className="w-[7px]" />
        <Tool name="display" label="Display style" className="w-[13px]" size="w-2.5 h-2.5" /><Caret className="w-[7px]" />
        <Tool name="eye" label="Hide items" className="w-[13px]" size="w-2.5 h-2.5" /><Caret className="w-[7px]" />
        <Tool name="ball" label="Edit appearance" className="w-[13px]" size="w-2.5 h-2.5" />
        <Tool name="scene" label="Apply scene" className="w-[13px]" size="w-2.5 h-2.5" /><Caret className="w-[7px]" />
        <Tool name="monitor" label="View settings" className="w-[13px]" size="w-2.5 h-2.5" /><Caret className="w-[7px]" />
      </div>
      <div className="mt-[17px] mb-[37px]"><Bottle /></div>
      <Triad />
      <button aria-label="Hide feature tree" className="absolute left-0 top-[166px] w-[5px] h-6 bg-[#f7f7f7] border-r border-[#b0b0b0] flex items-center justify-center">
        <span className="w-0.5 h-0.5 bg-[#999]" />
      </button>
      <div className="absolute right-0 top-[14px] flex flex-col w-4 border-l border-t border-[#999]">
        {["home", "library", "openFolder", "palette", "ball", "property"].map((n, i) => (
          <Tool key={n} name={n} size="w-2.5 h-2.5" className={clsx("w-full h-[15px] border-b border-[#999]", i === 0 ? "bg-[#f7f7f7]" : "bg-[#d0d0d0]")} />
        ))}
      </div>
    </main>
  );
}

function PaneSection({ title, children }) {
  return (
    <section className="mt-3.5 border-t border-[#888] text-[#666]">
      <h2 className="flex items-center justify-between h-3 pl-0.5 pr-1 font-bold text-[#444] whitespace-nowrap">
        {title}
        <svg viewBox="0 0 8 5" className="w-[5px] h-[3px]" fill="none" stroke="#444" strokeWidth="1.300"><path d="m1 4 3-3 3 3" /></svg>
      </h2>
      <ul>{children}</ul>
    </section>
  );
}

function PaneLink({ icon, children, className = "h-4" }) {
  return (
    <li className={clsx("flex items-center", className)}>
      <a href="#" className="flex items-center gap-0.5 leading-2">
        <Icon name={icon} className="w-[11px] h-[11px]" />
        <span>{children}</span>
      </a>
    </li>
  );
}

function TaskPane() {
  return (
    <aside className="w-[118px] shrink-0 border-l border-[#a5a5a5] font-['Noto_Sans',sans-serif]">
      <div className="flex items-center h-3 mt-px bg-[#a9aab0] border-b border-[#555] pl-1 whitespace-nowrap">
        <span className="font-bold text-[#222]">«SOLIDWORKS Resources</span>
        <Tool name="gearLight" label="Pane options" className="w-2 ml-auto" size="w-2 h-2" />
        <Tool name="pinDark" label="Pin pane" className="w-3" size="w-2 h-2" />
      </div>
      <div className="flex flex-col w-[93px] ml-[7px] pt-[15px] text-[6px]">
        <a href="#" className="flex items-center gap-0.5 h-4 text-[#666] whitespace-nowrap">
          <Icon name="home" className="w-2.5 h-2.5" />Welcome to SOLIDWORKS
        </a>
        <PaneSection title="SOLIDWORKS Tools">
          <PaneLink icon="redTool">Property Tab Builder</PaneLink>
          <PaneLink icon="redTool">SOLIDWORKS Rx</PaneLink>
          <PaneLink icon="redTool" className="h-[18px]">Performance Benchmark Test</PaneLink>
          <PaneLink icon="score">Compare My Score</PaneLink>
          <PaneLink icon="wizard" className="h-5">SOLIDWORKS Settings Wizard</PaneLink>
          <PaneLink icon="products">My Products</PaneLink>
        </PaneSection>
        <PaneSection title="Online Resources">
          <PaneLink icon="globe" className="h-[18px]"><span className="block">3DEXPERIENCE</span>Marketplace</PaneLink>
          <PaneLink icon="partner">Partner Solutions</PaneLink>
        </PaneSection>
        <PaneSection title="Subscription Services">
          <PaneLink icon="subscription">Subscription Services</PaneLink>
        </PaneSection>
      </div>
    </aside>
  );
}

function SideToolbar() {
  return (
    <aside className="self-start flex flex-col w-[25px] shrink-0 pt-0.5 border-l border-b border-[#b0b0b0]">
      {["check", "measure", "scale", "sectionProps", "gauge", "stats", "checkCube", "compareCube", "sigma", "deviation", "zebra", "curvature", "docs", "costing", "table"].map((n) => (
        <div key={n} className="flex items-center h-[13px] pl-px">
          <Tool name={n} size="w-2.5 h-2.5" />
          {n === "costing" && <Caret className="w-2" />}
        </div>
      ))}
      <div className="h-[5px] mt-[2px] mx-0.5 mb-0.5 border-y border-[#999]" />
      {["sim", "flow", "circleCheck", "squares", "blueCircle"].map((n) => (
        <Tool key={n} name={n} size="w-2.5 h-2.5" className="w-4 h-[13px] last:mb-0.5" />
      ))}
    </aside>
  );
}

function BottomTabs() {
  return (
    <div className="flex items-stretch h-[11px] border-t border-[#b4b4b4]">
      <div className="flex w-[42px] bg-[#a3a7b8]">
        {["M3 2v8M9 2 5 6l4 4", "M8 2 4 6l4 4", "m4 2 4 4-4 4", "m3 2 4 4-4 4M9 2v8"].map((d) => (
          <button key={d} aria-label="Scroll tabs" className="flex-1 flex items-center justify-center border-r border-[#8d91a5]">
            <svg viewBox="0 0 12 12" className="w-[7px] h-[7px]" fill="none" stroke="#777b90" strokeWidth="1.500"><path d={d} /></svg>
          </button>
        ))}
      </div>
      <button className="w-[37px] font-bold flex items-center justify-center font-['Noto_Sans',sans-serif]">Model</button>
      <button className="w-[45px] bg-[#d3d3d3] border-x border-[#b0b0b0] flex items-center justify-center font-['Noto_Sans',sans-serif]">3D Views</button>
      <button className="w-[72px] bg-[#d3d3d3] border-r border-[#b0b0b0] flex items-center pl-1.5 font-['Noto_Sans',sans-serif]">Motion Study 1</button>
    </div>
  );
}

const FILTERS = [
  "fVertex", "fEdge", "fFace", "fSurface", "iso", "fAxis", "fPlane", "fVertex", "fCurve", "fSketchSeg", "fAxis", "fTarget",
  "fDim", "fTag", "fRough", "fTol", "fNote", "fDatum", "fWeld", "fHole", "fNote", "fBlock", "fDatum", "fMass", "fConn",
  "fConn", "fFace", "fEdge", "fVertex",
];

function BottomBars() {
  return (
    <footer>
      <div className="flex items-center h-4 pl-[70px]">
        <Divider />
        <div className="flex items-center gap-[3px] px-1">
          {["greyBlob", "greyBlob", "greyPen", "greyLines", "greyDash", "greyHide", "colorMode"].map((n, i) => (
            <Tool key={i} name={n} className="w-[11px]" size="w-2.5 h-2.5" />
          ))}
        </div>
        <Divider />
      </div>
      <div className="flex items-center h-4 w-[480px] border-t border-r border-[#b4b4b4] pl-1">
        <Tool name="filterPurple" label="Toggle filters" size="w-[9px] h-[9px]" className="w-[13px]" />
        <Tool name="filterGrey" label="Clear filters" size="w-2.5 h-2.5" className="w-[13px]" />
        <Tool name="filters" label="All filters" size="w-2.5 h-2.5" className="w-[13px] mr-px" />
        <div className="flex h-3.5 border-r border-[#c8c8c8]">
          <Tool name="cursor" label="Select" className="w-4 bg-[#b1b1b1]" />
          <span className="flex items-center"><Caret className="w-1.5" /></span>
        </div>
        <Tool name="cursorOff" label="Select over geometry" className="w-[14px]" size="w-2.5 h-2.5" />
        <Divider className="h-3" />
        <div className="flex-1 flex items-center justify-between px-1">
          {FILTERS.map((n, i) => <Tool key={i} name={n} className="w-[11px]" size="w-2.5 h-2.5" funnel />)}
        </div>
      </div>
    </footer>
  );
}

export default function App() {
  return (
    <div className="flex flex-col min-h-screen overflow-hidden bg-[#f7f7f7] text-[#2b2b2b] text-[7px] leading-[10px] font-['Open_Sans','Noto_Sans',sans-serif]">
      <div className="flex h-px bg-[#dcdcdc]">
        <span className="w-[42%]" />
        <span className="w-[4%] bg-[#5b9bd0]" />
        <span className="w-[12%] bg-[#77757c]" />
      </div>
      <TitleBar />
      <ViewBar />
      <Ribbon />
      <div className="flex">
        <div className="flex-1 min-w-0 bg-white bg-[radial-gradient(ellipse_45%_30%_at_100%_88%,#eff0f5,transparent),linear-gradient(to_bottom,transparent_55%,#ffffff99_61%,#ffffff_70%),radial-gradient(ellipse_48%_75%_at_84%_43%,#d9dce8_0%,#dfe2ecdd_35%,#eef0f688_70%,transparent_100%),linear-gradient(to_bottom,transparent_26%,#eceef4_42%,#e0e3ed_52%,#e0e3ed_60%,transparent_70%)]">
          <CommandTabs />
          <div className="flex">
            <FeatureTree />
            <Viewport />
          </div>
        </div>
        <TaskPane />
        <SideToolbar />
      </div>
      <BottomTabs />
      <BottomBars />
    </div>
  );
}
